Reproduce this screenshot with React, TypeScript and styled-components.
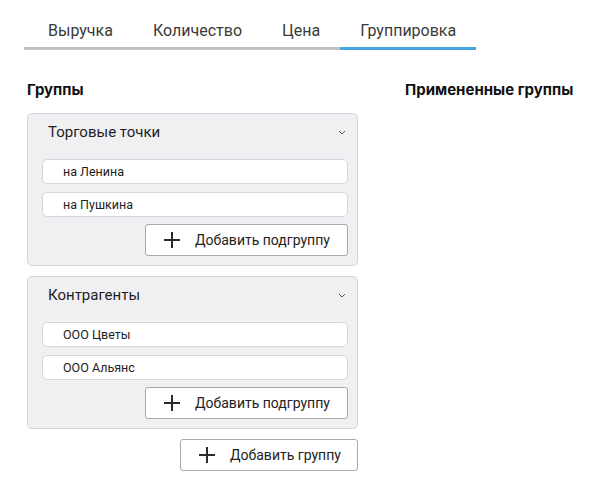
import React from 'react'
import styled, { createGlobalStyle } from 'styled-components'

const GlobalStyle = createGlobalStyle`
  body {
    margin: 0;
    background: #ffffff;
    font-family: Roboto, 'Noto Sans', sans-serif;
    color: #222222;
  }
`

const tabs = ['Выручка', 'Количество', 'Цена', 'Группировка']

const groups = [
  { title: 'Торговые точки', items: ['на Ленина', 'на Пушкина'] },
  { title: 'Контрагенты', items: ['ООО Цветы', 'ООО Альянс'] },
]

function Plus() {
  return (
    <svg width="18" height="18" viewBox="0 0 18 18">
      <path d="M9 1v16M1 9h16" stroke="#2b2b2b" strokeWidth="2" fill="none" />
    </svg>
  )
}

function Chevron() {
  return (
    <svg width="8" height="5" viewBox="0 0 8 5">
      <path d="M1 1l3 3 3-3" stroke="#555" strokeWidth="1" fill="none" />
    </svg>
  )
}

export default function App() {
  return (
    <Page>
      <GlobalStyle />
      <TabBar>
        {tabs.map((t, i) => (
          <Tab key={t} $active={i === 3}>{t}</Tab>
        ))}
      </TabBar>
      <Columns>
        <LeftCol>
          <Heading>Группы</Heading>
          {groups.map((g) => (
            <Card key={g.title}>
              <CardHead>
                <CardTitle>{g.title}</CardTitle>
                <Chevron />
              </CardHead>
              <ItemList>
                {g.items.map((it) => (
                  <Item key={it}>{it}</Item>
                ))}
              </ItemList>
              <ButtonRow $inner>
                <AddButton $width={203}>
                  <Plus />
                  <span>Добавить подгруппу</span>
                </AddButton>
              </ButtonRow>
            </Card>
          ))}
          <ButtonRow>
            <AddButton $width={178}>
              <Plus />
              <span>Добавить группу</span>
            </AddButton>
          </ButtonRow>
        </LeftCol>
        <RightCol>
          <Heading>Примененные группы</Heading>
        </RightCol>
      </Columns>
    </Page>
  )
}

const Page = styled.div`
    width: 598px;
    height: 498px;
    padding: 14px 0 0 24px;
    box-sizing: border-box;
`

const TabBar = styled.div`
    display: flex;
    flex-direction: row;
    align-self: flex-start;
`

const Tab = styled.div<{ $active?: boolean }>`
    height: 33px;
    padding: 0 20px;
    display: flex;
    align-items: center;
    justify-content: center;

    font-size: 16px;
    color: #3a3a3a;

    border-bottom: 3px solid ${(p) => (p.$active ? '#47a3dd' : '#c0c0c4')};

    &:first-child {
        padding-left: 24px;
    }
`

const Columns = styled.div`
    display: flex;
    flex-direction: row;
    margin-top: 30px;
    padding-left: 3px;
    gap: 47px;
`

const LeftCol = styled.div`
    width: 331px;
    display: flex;
    flex-direction: column;
    gap: 10px;
`

const RightCol = styled.div`
    display: flex;
    flex-direction: column;
`

const Heading = styled.div`
    font-family: Inter, Roboto, sans-serif;
    font-size: 15px;
    font-weight: 700;
    line-height: 20px;
    color: #111111;
    margin-bottom: 3px;
`

const Card = styled.div`
    display: flex;
    flex-direction: column;
    padding: 0 9px 9px 14px;

    background: #f0f0f3;
    border: 1px solid #d3d3db;
    border-radius: 5px;
`

const CardHead = styled.div`
    height: 36px;
    display: flex;
    flex-direction: row;
    justify-content: space-between;
    align-items: center;
    padding: 0 2px 0 6px;
    margin-bottom: 9px;
`

const CardTitle = styled.div`
    font-size: 15px;
    color: #1e1e1e;
`

const ItemList = styled.div`
    display: flex;
    flex-direction: column;
    gap: 8px;
`

const Item = styled.div`
    height: 25px;
    box-sizing: border-box;
    display: flex;
    align-items: center;
    padding-left: 20px;

    font-size: 12.5px;
    color: #1e1e1e;

    background: #ffffff;
    border: 1px solid #d5d5dd;
    border-radius: 5px;
`

const ButtonRow = styled.div<{ $inner?: boolean }>`
    display: flex;
    justify-content: flex-end;
    margin-top: ${(p) => (p.$inner ? '7px' : '0')};
`

const AddButton = styled.button<{ $width: number }>`
    width: ${(p) => p.$width}px;
    height: 32px;
    display: flex;
    flex-direction: row;
    align-items: center;
    gap: 14px;
    padding: 0 0 0 17px;

    font-family: Roboto, 'Noto Sans', sans-serif;
    font-size: 14px;
    color: #222222;

    background: #ffffff;
    border: 1px solid #a8a8ac;
    border-radius: 3px;
`
